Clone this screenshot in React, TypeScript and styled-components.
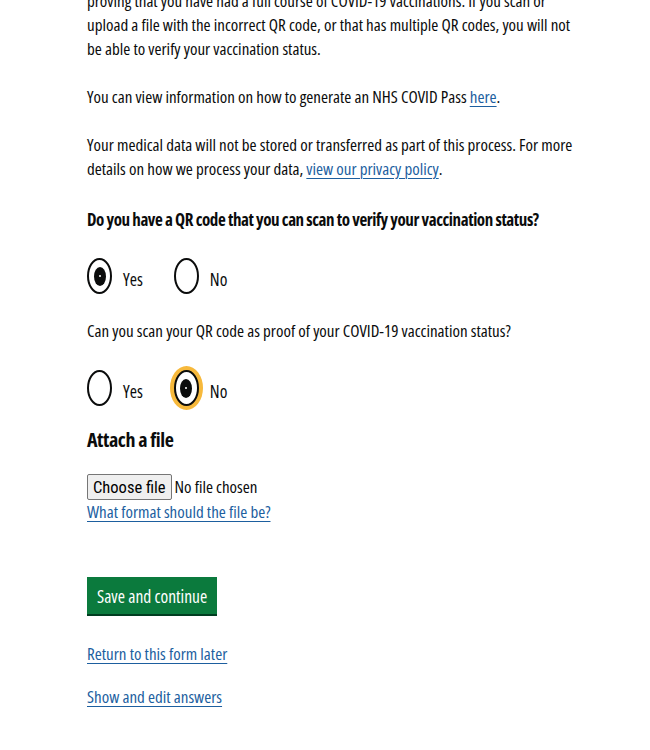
import React from "react";
import styled, { createGlobalStyle } from "styled-components";

const GlobalStyle = createGlobalStyle`
  html, body { margin: 0; padding: 0; background: #ffffff; }
  body {
    font-family: "Open Sans", "Noto Sans", sans-serif;
    font-stretch: 75%;
    color: #0b0c0c;
    overflow: hidden;
  }
`;

const Page = styled.main`
  margin-top: -11px;
  padding-left: 87px;
  width: 492px;
  display: flex;
  flex-direction: column;
  align-items: flex-start;
`;

const Body = styled.p<{ $mt?: number }>`
  margin: ${(p) => p.$mt ?? 0}px 0 0;
  font-size: 17px;
  line-height: 24px;
`;

const Link = styled.a<{ $mt?: number }>`
  margin-top: ${(p) => p.$mt ?? 0}px;
  color: #1d5f9f;
  font-size: 17px;
  line-height: 24px;
  text-decoration: underline;
  text-decoration-thickness: 1px;
  text-underline-offset: 3px;
  cursor: pointer;
`;

const InlineLink = styled.a`
  color: #1d5f9f;
  text-decoration: underline;
  text-decoration-thickness: 1px;
  text-underline-offset: 3px;
  cursor: pointer;
`;

const Fieldset = styled.fieldset<{ $mt: number }>`
  margin: ${(p) => p.$mt}px 0 0;
  padding: 0;
  border: 0;
  display: flex;
  flex-direction: column;
  align-items: flex-start;
`;

const Legend = styled.legend<{ $bold?: boolean }>`
  padding: 0;
  font-size: 17px;
  line-height: 24px;
  font-weight: ${(p) => (p.$bold ? 700 : 400)};
  letter-spacing: ${(p) => (p.$bold ? "-0.42px" : "0")};
`;

const RadioRow = styled.div<{ $mt: number }>`
  margin-top: ${(p) => p.$mt}px;
  display: flex;
  align-items: center;
`;

const RadioItem = styled.label`
  display: flex;
  align-items: center;
  gap: 11px;
  margin-right: 31px;
  cursor: pointer;
`;

const RadioText = styled.span`
  padding-top: 5px;
  font-size: 17.5px;
  line-height: 24px;
`;

const HiddenInput = styled.input`
  position: absolute;
  opacity: 0;
  width: 0;
  height: 0;
  margin: 0;
`;

const Circle = styled.span<{ $focus?: boolean }>`
  box-sizing: border-box;
  width: 25px;
  height: 36px;
  border: 2px solid #0b0c0c;
  border-radius: 50%;
  display: flex;
  align-items: center;
  justify-content: center;
  background: #ffffff;
  box-shadow: ${(p) => (p.$focus ? "0 0 0 4px #f7b93c" : "none")};
`;

const Dot = styled.span`
  width: 12px;
  height: 19px;
  border-radius: 50%;
  background: #0b0c0c;
  display: flex;
  align-items: center;
  justify-content: center;
  &::after {
    content: "";
    width: 2px;
    height: 2px;
    border-radius: 50%;
    background: #ffffff;
  }
`;

const Heading = styled.h2<{ $mt: number }>`
  margin: ${(p) => p.$mt}px 0 0;
  font-size: 20px;
  line-height: 28px;
  font-weight: 700;
  letter-spacing: -0.4px;
`;

const FileField = styled.label`
  margin-top: 20px;
  display: flex;
  align-items: center;
  gap: 3px;
  height: 26px;
  cursor: pointer;
`;

const FileButton = styled.span`
  box-sizing: border-box;
  height: 26px;
  padding: 0 5px;
  display: flex;
  align-items: center;
  font-family: Roboto, "Liberation Sans", sans-serif;
  font-stretch: 78%;
  font-size: 16.5px;
  color: #000000;
  background: #efefef;
  border: 1px solid #767676;
  border-radius: 2px;
`;

const FileName = styled.span`
  font-size: 17px;
  line-height: 24px;
`;

const PrimaryButton = styled.button`
  margin-top: 53px;
  height: 37px;
  padding: 0 10px;
  border: 0;
  border-radius: 0;
  background: #0b7a3d;
  box-shadow: 0 2px 0 #003d20;
  color: #ffffff;
  font-family: "Open Sans", sans-serif;
  font-stretch: 75%;
  font-size: 17.5px;
  font-weight: 500;
  line-height: 24px;
  cursor: pointer;
`;

type RadioProps = { name: string; label: string; checked?: boolean; focus?: boolean };

function Radio({ name, label, checked, focus }: RadioProps) {
  return (
    <RadioItem>
      <HiddenInput type="radio" name={name} defaultChecked={checked} />
      <Circle $focus={focus}>{checked && <Dot />}</Circle>
      <RadioText>{label}</RadioText>
    </RadioItem>
  );
}

export default function App() {
  return (
    <>
      <GlobalStyle />
      <Page>
        <Body>
          proving that you have had a full course of COVID-19 vaccinations. If you scan or
          upload a file with the incorrect QR code, or that has multiple QR codes, you will not
          be able to verify your vaccination status.
        </Body>
        <Body $mt={24}>
          You can view information on how to generate an NHS COVID Pass{" "}
          <InlineLink>here</InlineLink>.
        </Body>
        <Body $mt={24}>
          Your medical data will not be stored or transferred as part of this process. For more
          details on how we process your data, <InlineLink>view our privacy policy</InlineLink>.
        </Body>

        <Fieldset $mt={27}>
          <Legend $bold>Do you have a QR code that you can scan to verify your vaccination status?</Legend>
          <RadioRow $mt={26}>
            <Radio name="has-qr" label="Yes" checked />
            <Radio name="has-qr" label="No" />
          </RadioRow>
        </Fieldset>

        <Fieldset $mt={25}>
          <Legend>Can you scan your QR code as proof of your COVID-19 vaccination status?</Legend>
          <RadioRow $mt={27}>
            <Radio name="can-scan" label="Yes" />
            <Radio name="can-scan" label="No" checked focus />
          </RadioRow>
        </Fieldset>

        <Heading $mt={20}>Attach a file</Heading>
        <FileField>
          <HiddenInput type="file" />
          <FileButton>Choose file</FileButton>
          <FileName>No file chosen</FileName>
        </FileField>
        <Link>What format should the file be?</Link>

        <PrimaryButton type="button">Save and continue</PrimaryButton>

        <Link $mt={28}>Return to this form later</Link>
        <Link $mt={19}>Show and edit answers</Link>
      </Page>
    </>
  );
}
